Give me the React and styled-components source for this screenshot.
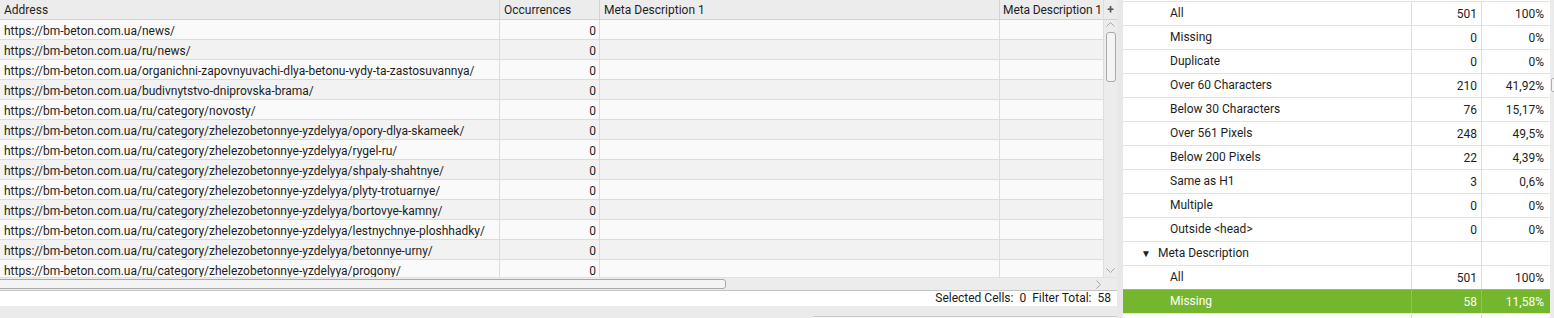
import React from "react";
import styled, { createGlobalStyle } from "styled-components";

const Global = createGlobalStyle`
  html, body { margin: 0; padding: 0; background: #ebebeb; }
  body { font-family: Roboto, "Noto Sans", "Liberation Sans", sans-serif; font-size: 12px; color: #1e1e1e; }
  * { box-sizing: border-box; }
`;

const Screen = styled.div`
  display: grid;
  grid-template-columns: 1117px 6px 1fr;
  width: 1554px;
  height: 318px;
  overflow: hidden;
  background: #ebebeb;
`;

const LeftPanel = styled.div`
  display: flex;
  flex-direction: column;
  height: 318px;
`;

const TableArea = styled.div`
  display: grid;
  grid-template-columns: 1fr 14px;
  height: 277px;
  overflow: hidden;
`;

const TableBody = styled.div`
  display: flex;
  flex-direction: column;
  overflow: hidden;
  background: #fafafa;
`;

const COLS = "500px 100px 400px 103px";

const HeaderRow = styled.div`
  display: grid;
  grid-template-columns: ${COLS};
  height: 20px;
  flex: none;
  background: #ececec;
  border-bottom: 1px solid #d2d2d2;
`;

const HeaderCell = styled.div`
  padding: 0 ${(p) => (p.$last ? "0" : "4px")} 0 ${(p) => (p.$last ? "3px" : "4px")};
  height: 19px;
  line-height: 21px;
  white-space: nowrap;
  overflow: hidden;
  letter-spacing: ${(p) => (p.$last ? "-0.1px" : "normal")};
  border-right: ${(p) => (p.$last ? "none" : "1px solid #d4d4d4")};
  color: #1e1e1e;
`;

const Row = styled.div`
  display: grid;
  grid-template-columns: ${COLS};
  height: 20px;
  flex: none;
  background: ${(p) => (p.$alt ? "#f2f2f2" : "#fafafa")};
  border-bottom: 1px solid #dcdcdc;
`;

const Cell = styled.div`
  padding: 0 3px 0 4px;
  height: 19px;
  line-height: 22px;
  white-space: nowrap;
  overflow: hidden;
  text-align: ${(p) => (p.$num ? "right" : "left")};
  border-right: ${(p) => (p.$last ? "none" : "1px solid #dcdcdc")};
`;

const VScroll = styled.div`
  display: flex;
  flex-direction: column;
  align-items: center;
  background: #ececec;
  border-left: 1px solid #dedede;
`;

const PlusBox = styled.div`
  height: 20px;
  width: 100%;
  flex: none;
  display: flex;
  align-items: center;
  justify-content: center;
  background: #ececec;
  border-bottom: 1px solid #d2d2d2;
  font-weight: 700;
  font-size: 12px;
  color: #555;
`;

const ArrowSlot = styled.div`
  display: flex;
  flex: none;
  margin: ${(p) => p.$margin || "0"};
`;

const VThumb = styled.div`
  width: 10px;
  height: 50px;
  flex: none;
  margin-top: 4px;
  border: 1px solid #a9a9a9;
  border-radius: 3px;
  background: #f4f4f4;
`;

const Spacer = styled.div`
  flex: 1;
`;

const HScroll = styled.div`
  height: 13px;
  flex: none;
  display: flex;
  align-items: center;
  justify-content: space-between;
  background: #ececec;
  border-top: 1px solid #e2e2e2;
  padding-right: 15px;
`;

const HThumb = styled.div`
  width: 730px;
  height: 10px;
  margin-left: -4px;
  border: 1px solid #a9a9a9;
  border-radius: 3px;
  background: #f4f4f4;
`;

const StatusBar = styled.div`
  height: 16px;
  flex: none;
  background: #ffffff;
  border-top: 1px solid #c4c4c4;
  display: flex;
  justify-content: flex-end;
  align-items: center;
  gap: 6px;
  padding-right: 6px;
  white-space: nowrap;
  color: #1a1a1a;
  line-height: 17px;
`;

const BottomStrip = styled.div`
  flex: 1;
  background: #ebebeb;
  position: relative;
`;

const BottomLine = styled.div`
  position: absolute;
  left: 813px;
  right: 0;
  bottom: 0;
  height: 2px;
  border-top: 1px solid #c8c8c8;
  background: #f6f6f6;
`;

const Splitter = styled.div`
  background: #e8e8e8;
`;

const RightPanel = styled.div`
  display: grid;
  grid-template-columns: 1fr 4px;
  background: #ffffff;
  height: 318px;
  overflow: hidden;
`;

const SumList = styled.div`
  display: flex;
  flex-direction: column;
  padding-top: 1px;
`;

const SumRow = styled.div`
  display: grid;
  grid-template-columns: 289px 70px 66px;
  height: 24px;
  flex: none;
  border-top: 1px solid ${(p) => (p.$active ? "#8cc456" : "#e2e2e2")};
  background: ${(p) => (p.$active ? "#74b72e" : "#ffffff")};
  color: ${(p) => (p.$active ? "#ffffff" : "#1e1e1e")};
  font-size: 12px;
`;

const SumLabel = styled.div`
  padding-left: ${(p) => (p.$group ? "18px" : "47px")};
  height: 23px;
  line-height: 25px;
  white-space: nowrap;
  display: flex;
  align-items: center;
  gap: 7px;
  border-right: 1px solid ${(p) => (p.$active ? "#8cc456" : "#dedede")};
`;

const SumNum = styled.div`
  text-align: right;
  padding-right: 4px;
  height: 23px;
  line-height: 25px;
  border-right: ${(p) => (p.$last ? "none" : `1px solid ${p.$active ? "#8cc456" : "#dedede"}`)};
`;

const Caret = styled.span`
  font-size: 10px;
  line-height: 1;
  margin-top: 1px;
  color: #1e1e1e;
`;

const RScroll = styled.div`
  background: #ebebeb;
  position: relative;
`;

const RThumb = styled.div`
  position: absolute;
  left: 1px;
  top: 78px;
  width: 6px;
  height: 14px;
  border: 1px solid #b0b0b0;
  border-radius: 2px;
  background: #f4f4f4;
`;

const Chevron = ({ dir }) => {
  const paths = {
    up: "M1.5 4.5 L5.5 0.5 L9.5 4.5",
    down: "M1.5 0.5 L5.5 4.5 L9.5 0.5",
    right: "M0.5 1.5 L4.5 5.5 L0.5 9.5",
  };
  const w = dir === "right" ? 6 : 11;
  const h = dir === "right" ? 11 : 6;
  return (
    <svg width={w} height={h} viewBox={`0 0 ${w} ${h}`}>
      <path d={paths[dir]} fill="none" stroke="#a6a6a6" strokeWidth="1" />
    </svg>
  );
};

const urls = [
  "https://bm-beton.com.ua/news/",
  "https://bm-beton.com.ua/ru/news/",
  "https://bm-beton.com.ua/organichni-zapovnyuvachi-dlya-betonu-vydy-ta-zastosuvannya/",
  "https://bm-beton.com.ua/budivnytstvo-dniprovska-brama/",
  "https://bm-beton.com.ua/ru/category/novosty/",
  "https://bm-beton.com.ua/ru/category/zhelezobetonnye-yzdelyya/opory-dlya-skameek/",
  "https://bm-beton.com.ua/ru/category/zhelezobetonnye-yzdelyya/rygel-ru/",
  "https://bm-beton.com.ua/ru/category/zhelezobetonnye-yzdelyya/shpaly-shahtnye/",
  "https://bm-beton.com.ua/ru/category/zhelezobetonnye-yzdelyya/plyty-trotuarnye/",
  "https://bm-beton.com.ua/ru/category/zhelezobetonnye-yzdelyya/bortovye-kamny/",
  "https://bm-beton.com.ua/ru/category/zhelezobetonnye-yzdelyya/lestnychnye-ploshhadky/",
  "https://bm-beton.com.ua/ru/category/zhelezobetonnye-yzdelyya/betonnye-urny/",
  "https://bm-beton.com.ua/ru/category/zhelezobetonnye-yzdelyya/progony/",
];

const summary = [
  { label: "All", n: "501", p: "100%" },
  { label: "Missing", n: "0", p: "0%" },
  { label: "Duplicate", n: "0", p: "0%" },
  { label: "Over 60 Characters", n: "210", p: "41,92%" },
  { label: "Below 30 Characters", n: "76", p: "15,17%" },
  { label: "Over 561 Pixels", n: "248", p: "49,5%" },
  { label: "Below 200 Pixels", n: "22", p: "4,39%" },
  { label: "Same as H1", n: "3", p: "0,6%" },
  { label: "Multiple", n: "0", p: "0%" },
  { label: "Outside <head>", n: "0", p: "0%" },
  { label: "Meta Description", n: "", p: "", group: true },
  { label: "All", n: "501", p: "100%" },
  { label: "Missing", n: "58", p: "11,58%", active: true },
  { label: "", n: "", p: "" },
];

export default function App() {
  return (
    <>
      <Global />
      <Screen>
        <LeftPanel>
          <TableArea>
            <TableBody>
              <HeaderRow>
                <HeaderCell>Address</HeaderCell>
                <HeaderCell>Occurrences</HeaderCell>
                <HeaderCell>Meta Description 1</HeaderCell>
                <HeaderCell $last>Meta Description 1</HeaderCell>
              </HeaderRow>
              {urls.map((u, i) => (
                <Row key={i} $alt={i % 2 === 1}>
                  <Cell>{u}</Cell>
                  <Cell $num>0</Cell>
                  <Cell />
                  <Cell $last />
                </Row>
              ))}
            </TableBody>
            <VScroll>
              <PlusBox>+</PlusBox>
              <ArrowSlot $margin="2px 0 0">
                <Chevron dir="up" />
              </ArrowSlot>
              <VThumb />
              <Spacer />
              <ArrowSlot $margin="0 0 3px">
                <Chevron dir="down" />
              </ArrowSlot>
            </VScroll>
          </TableArea>
          <HScroll>
            <HThumb />
            <Chevron dir="right" />
          </HScroll>
          <StatusBar>
            <span>Selected Cells:</span>
            <span>0</span>
            <span>Filter Total:</span>
            <span>58</span>
          </StatusBar>
          <BottomStrip>
            <BottomLine />
          </BottomStrip>
        </LeftPanel>
        <Splitter />
        <RightPanel>
          <SumList>
            {summary.map((r, i) => (
              <SumRow key={i} $active={r.active}>
                <SumLabel $group={r.group} $active={r.active}>
                  {r.group && <Caret>▼</Caret>}
                  {r.label}
                </SumLabel>
                <SumNum $active={r.active}>{r.n}</SumNum>
                <SumNum $active={r.active} $last>
                  {r.p}
                </SumNum>
              </SumRow>
            ))}
          </SumList>
          <RScroll>
            <RThumb />
          </RScroll>
        </RightPanel>
      </Screen>
    </>
  );
}
